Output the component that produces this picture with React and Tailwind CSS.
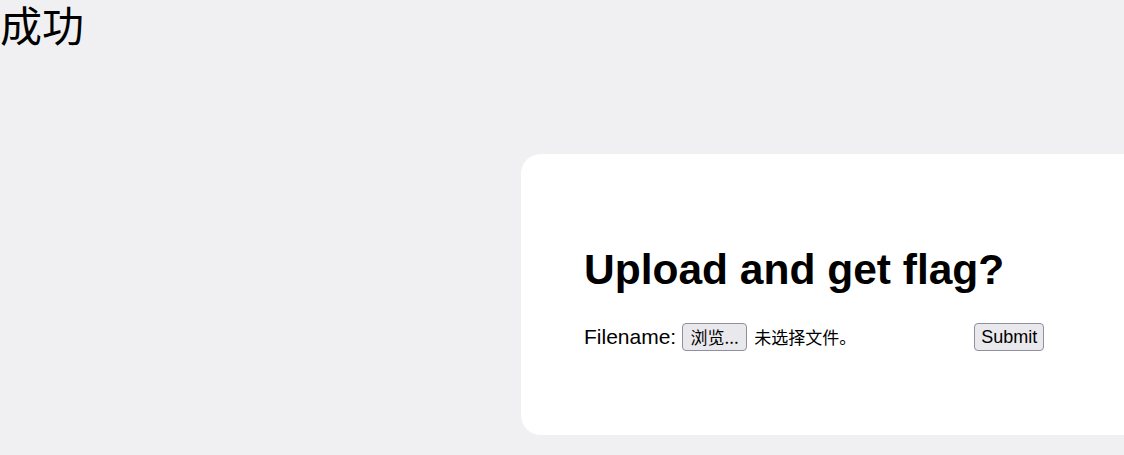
import React from "react";

const App = () => {
  return (
    <div className="min-h-[455px] w-full overflow-hidden bg-[#f0f0f2] text-black">
      {/* status text */}
      <div className="text-[42px] leading-[48px] font-['Noto_Sans_CJK_SC',serif]">
        成功
      </div>

      {/* upload card */}
      <div className="mt-[106px] ml-[521px] w-[700px] h-[281px] rounded-[20px] bg-white pt-[95px] pl-[63px]">
        <h2 className="text-[42.5px] leading-[42px] font-bold font-['Liberation_Sans',Arial,sans-serif]">
          Upload and get flag?
        </h2>

        <form className="mt-[32px] flex h-[28px] items-center font-['Liberation_Sans',Arial,sans-serif]">
          <span className="text-[21px] leading-[28px]">Filename:</span>

          <label className="ml-[6px] flex w-[288px] items-center cursor-pointer">
            <span className="flex h-[28px] w-[65px] items-center justify-center rounded-[4px] border border-[#8f8f9d] bg-[#e9e9ed] text-[17px] font-['Noto_Sans_CJK_SC',sans-serif]">
              浏览...
            </span>
            <span className="ml-[7px] text-[17px] font-['Noto_Sans_CJK_SC',sans-serif]">
              未选择文件。
            </span>
            <input type="file" className="hidden" />
          </label>

          <button
            type="button"
            className="ml-[4px] flex h-[28px] items-center rounded-[4px] border border-[#8f8f9d] bg-[#e9e9ed] px-[6px] text-[18px]"
          >
            Submit
          </button>
        </form>
      </div>
    </div>
  );
};

export default App;
